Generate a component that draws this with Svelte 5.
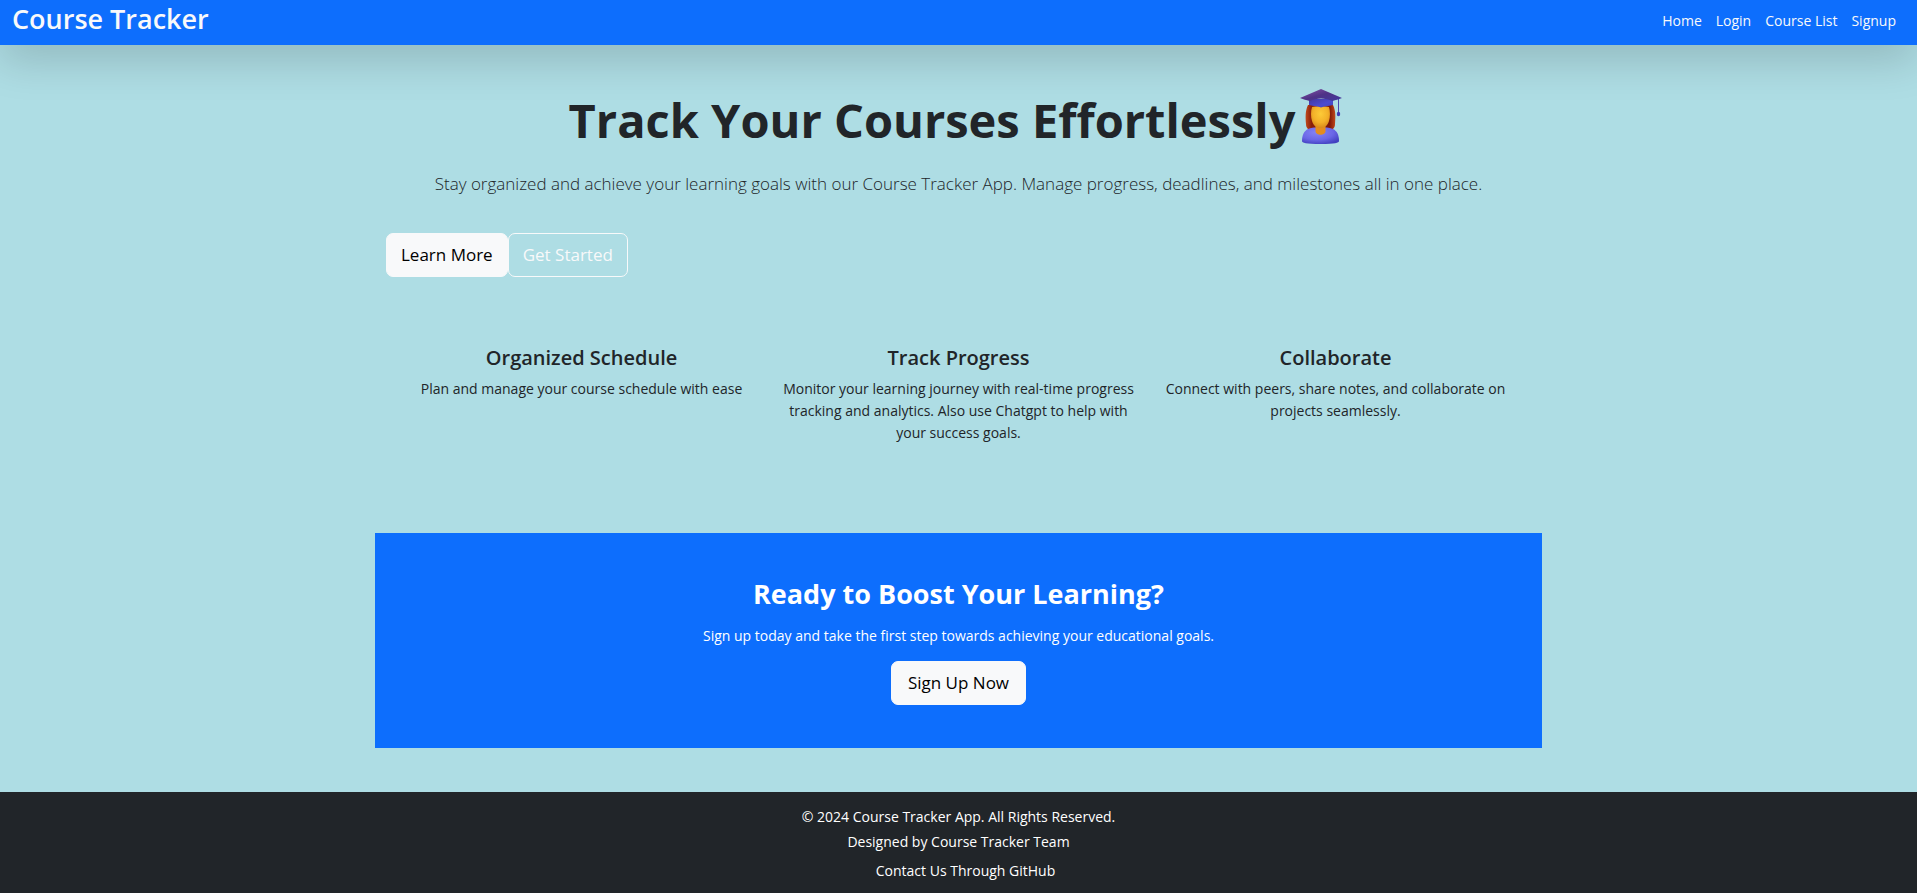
<script>
  const links = ['Home', 'Login', 'Course List', 'Signup'];
  const features = [
    { title: 'Organized Schedule', text: 'Plan and manage your course schedule with ease' },
    {
      title: 'Track Progress',
      text: 'Monitor your learning journey with real-time progress tracking and analytics. Also use Chatgpt to help with your success goals.'
    },
    {
      title: 'Collaborate',
      text: 'Connect with peers, share notes, and collaborate on projects seamlessly.'
    }
  ];
</script>

<div class="page">
  <header class="navbar">
    <a class="brand" href="#home">Course Tracker</a>
    <nav>
      {#each links as link}
        <a href="#{link.toLowerCase().replace(' ', '-')}">{link}</a>
      {/each}
    </nav>
  </header>

  <main>
    <section class="hero">
      <h1>
        <span>Track Your Courses Effortlessly</span>
        <svg class="graduate" viewBox="0 0 42 56" role="img" aria-label="Graduate">
          <defs>
            <linearGradient id="cap-top" x1="0" y1="0" x2="1" y2="1">
              <stop offset="0" stop-color="#8a55a8" />
              <stop offset=".5" stop-color="#4f3286" />
              <stop offset="1" stop-color="#4239a0" />
            </linearGradient>
            <linearGradient id="cap-band" x1="0" y1="0" x2="1" y2="1">
              <stop offset="0" stop-color="#4338a0" />
              <stop offset=".6" stop-color="#4a4bd0" />
              <stop offset="1" stop-color="#4544b8" />
            </linearGradient>
            <linearGradient id="hair" x1="0" y1="0" x2="1" y2="0">
              <stop offset="0" stop-color="#c14a1c" />
              <stop offset=".2" stop-color="#8a1f08" />
              <stop offset=".8" stop-color="#7c1606" />
              <stop offset="1" stop-color="#c2481c" />
            </linearGradient>
            <radialGradient id="face" cx=".5" cy=".35" r=".65">
              <stop offset="0" stop-color="#fdcb38" />
              <stop offset=".6" stop-color="#f3b129" />
              <stop offset="1" stop-color="#d98a1c" />
            </radialGradient>
            <radialGradient id="gown" cx=".4" cy=".3" r=".75">
              <stop offset="0" stop-color="#8583f5" />
              <stop offset=".6" stop-color="#6a66e6" />
              <stop offset="1" stop-color="#4240c0" />
            </radialGradient>
          </defs>
          <path d="M8 17C5 23 5.500 30 6 36c0 5 3 6 7 6h15c4 0 7-1 7-6 .500-6 1-13-2-19Z" fill="url(#hair)" />
          <path d="M2 53c0-6 2-10 6-12 2-1 4-1.500 6-1.500h13c2 0 4 .500 6 1.500 4 2 6 6 6 12 0 2-4 3-18.500 3S2 55 2 53Z" fill="url(#gown)" />
          <path d="M15.500 36h10v7c0 5-10 5-10 0Z" fill="#e58c1d" />
          <path d="M12 19c3-1 14-1 17 0 1.300 4 1.300 10 0 14-1.500 5-5 7-8.500 7S13.500 38 12 33c-1.300-4-1.300-10 0-14Z" fill="url(#face)" />
          <path d="M9 11h24v6c-5 1-9 1.500-12 2.500-3-1-7-1.500-12-2.500Z" fill="url(#cap-band)" />
          <path d="M0 10 21 1l21 9c-4 1.500-6 2-9.500 3-8-3.500-15-3.500-23 0C6 12 4 11.500 0 10Z" fill="url(#cap-top)" />
          <path d="M38.500 11v14" stroke="#4b45b0" stroke-width="1" />
          <ellipse cx="38.500" cy="26" rx="1.700" ry="2.300" fill="#3f3cb5" />
        </svg>
      </h1>
      <p class="lead">
        Stay organized and achieve your learning goals with our Course Tracker App. Manage progress,
        deadlines, and milestones all in one place.
      </p>
      <div class="actions">
        <button class="btn light" type="button">Learn More</button>
        <button class="btn outline" type="button">Get Started</button>
      </div>
    </section>

    <section class="features">
      {#each features as feature}
        <article>
          <h3>{feature.title}</h3>
          <p>{feature.text}</p>
        </article>
      {/each}
    </section>

    <section class="cta">
      <h2>Ready to Boost Your Learning?</h2>
      <p>Sign up today and take the first step towards achieving your educational goals.</p>
      <button class="btn light wide" type="button">Sign Up Now</button>
    </section>
  </main>

  <footer>
    <p>© 2024 Course Tracker App. All Rights Reserved.</p>
    <p>Designed by Course Tracker Team</p>
    <a href="#github">Contact Us Through GitHub</a>
  </footer>
</div>

<style>
  :global(body) {
    margin: 0;
    background: #aedde4;
  }

  .page {
    display: flex;
    flex-direction: column;
    min-height: 100vh;
    font-family: 'Segoe UI', 'Open Sans', 'Noto Sans', sans-serif;
    font-size: 14px;
    line-height: 22px;
    color: #212529;
  }

  h1,
  h2,
  h3,
  p {
    margin: 0;
  }

  a {
    color: inherit;
    text-decoration: none;
  }

  .navbar {
    display: flex;
    justify-content: space-between;
    height: 45px;
    padding: 0 21px 0 12px;
    background: #0d6efd;
    color: #f8f9fa;
    box-shadow: 0 14px 43px rgba(0, 0, 0, 0.175);
  }

  .brand {
    font-size: 27px;
    font-weight: 600;
    line-height: 38px;
  }

  nav {
    display: flex;
    gap: 14px;
    line-height: 42px;
  }

  main {
    flex: 1;
    box-sizing: border-box;
    width: 100%;
    max-width: 1167px;
    margin: 0 auto;
    padding-bottom: 43px;
  }

  .hero {
    padding: 43px 11px;
    text-align: center;
  }

  h1 {
    display: flex;
    justify-content: center;
    gap: 5px;
    font-size: 47px;
    font-weight: 700;
    line-height: 64px;
  }

  .graduate {
    width: 42px;
    height: 56px;
    margin-right: 6px;
  }

  .lead {
    margin-top: 18px;
    font-size: 17px;
    font-weight: 300;
    line-height: 27px;
  }

  .actions {
    display: flex;
    margin-top: 36px;
  }

  .btn {
    padding: 7px 14px;
    border: 1px solid #f8f9fa;
    border-radius: 7px;
    font-family: inherit;
    font-size: 17px;
    line-height: 28px;
  }

  .wide {
    padding: 7px 16px;
  }

  .light {
    background: #f8f9fa;
    color: #000;
  }

  .outline {
    background: transparent;
    color: #f8f9fa;
  }

  .features {
    display: grid;
    grid-template-columns: repeat(3, 1fr);
    padding: 24px 18px 89px;
    text-align: center;
  }

  .features article {
    padding: 0 10px;
  }

  h3 {
    margin-bottom: 7px;
    font-size: 20px;
    font-weight: 600;
    line-height: 27px;
  }

  .cta {
    padding: 43px 14px;
    background: #0d6efd;
    color: #fff;
    text-align: center;
  }

  h2 {
    font-size: 27px;
    font-weight: 700;
    line-height: 36px;
  }

  .cta p {
    margin: 13px 0 14px;
  }

  footer {
    display: flex;
    flex-direction: column;
    align-items: center;
    padding: 14px 14px 11px;
    background: #212529;
    color: #fff;
  }

  footer p {
    margin-bottom: 3px;
  }

  footer a {
    margin-top: 4px;
    padding-left: 14px;
  }
</style>
